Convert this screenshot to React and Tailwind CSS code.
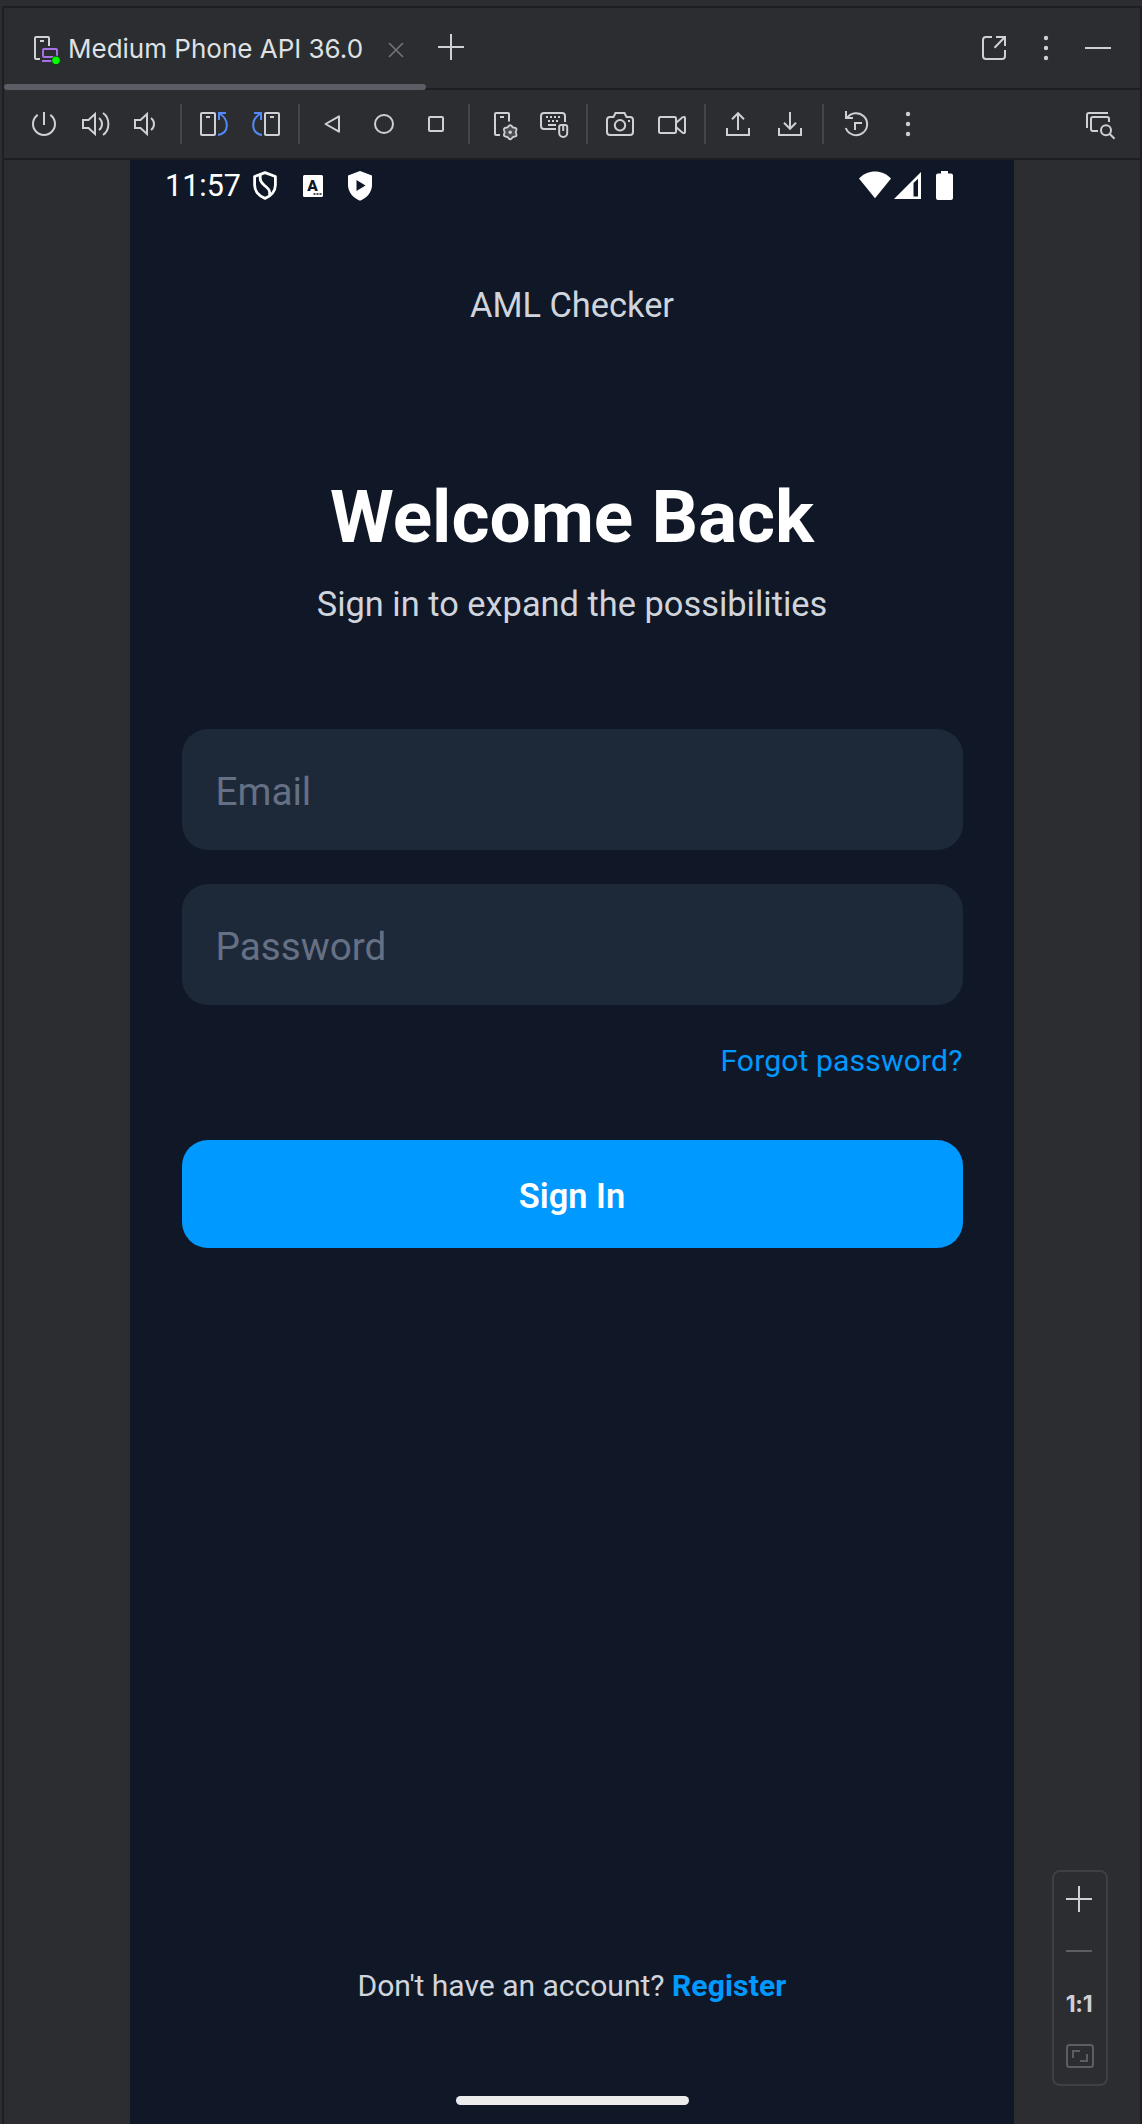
import React from "react";

const LIGHT = "#ced0d6";
const BLUE = "#548af7";

function Icon({ children, className = "" }) {
  return (
    <svg
      width="32"
      height="32"
      viewBox="0 0 32 32"
      fill="none"
      stroke={LIGHT}
      strokeWidth="2"
      className={"block shrink-0 overflow-visible " + className}
    >
      {children}
    </svg>
  );
}

const gearPath =
  Array.from({ length: 73 }, (_, i) => {
    const a = (i / 72) * Math.PI * 2;
    const r = 6.3 + 0.75 * Math.cos(6 * a);
    const x = 24.2 + r * Math.sin(a);
    const y = 24.2 - r * Math.cos(a);
    return `${i ? "L" : "M"}${x.toFixed(2)} ${y.toFixed(2)}`;
  }).join("") + "Z";

const Dots = () => (
  <Icon>
    <g fill={LIGHT} stroke="none">
      <circle cx="16" cy="6" r="2.2" />
      <circle cx="16" cy="16" r="2.2" />
      <circle cx="16" cy="26" r="2.2" />
    </g>
  </Icon>
);

const RotateShape = () => (
  <>
    <rect x="3" y="5" width="14" height="22" rx="1" />
    <path d="M8 9h4" />
    <path d="M28 5h-7v7M21.5 5.5C31.5 11.500 31.500 25 20 27" stroke={BLUE} />
  </>
);

const groups = [
  [
    <Icon key="power">
      <path d="M16 4v13M9.700 6.900a11 11 0 1 0 12.600 0" />
    </Icon>,
    <Icon key="volume-up">
      <path d="M3 12h5.500L15 6v20l-6.500-6H3zM19 10c4 3 4 9 0 12M23 5c7.200 5 7.200 17 0 22" />
    </Icon>,
    <Icon key="volume-down">
      <path d="M3 12h5.500L15 6v20l-6.500-6H3zM19 10c4 3 4 9 0 12" />
    </Icon>,
  ],
  [
    <Icon key="rotate-left">
      <RotateShape />
    </Icon>,
    <Icon key="rotate-right">
      <g transform="translate(32 0) scale(-1 1)">
        <RotateShape />
      </g>
    </Icon>,
  ],
  [
    <Icon key="back">
      <path d="M9.500 16L23 8.300v15.400z" strokeLinejoin="round" />
    </Icon>,
    <Icon key="home">
      <circle cx="16" cy="16" r="9" />
    </Icon>,
    <Icon key="overview">
      <rect x="9" y="9" width="14" height="14" rx="1" />
    </Icon>,
  ],
  [
    <Icon key="device-settings">
      <path d="M14 27H10a1 1 0 0 1-1-1V6a1 1 0 0 1 1-1h12a1 1 0 0 1 1 1v7.500M14 9h4" />
      <path d={gearPath} fill="#4b4d51" strokeWidth="1.800" />
      <circle cx="24.200" cy="24.200" r="1.700" fill={LIGHT} stroke="none" />
    </Icon>,
    <Icon key="hardware-input">
      <path d="M18 21H6a3 3 0 0 1-3-3V8a3 3 0 0 1 3-3h18a3 3 0 0 1 3 3v6" />
      <path d="M8 9h14" strokeDasharray="2 2" />
      <path d="M10 13h10" strokeDasharray="2 2" />
      <path d="M10 17h8" />
      <path d="M21.200 19a2 2 0 0 1 2-2h4a2 2 0 0 1 2 2v6a4 4 0 0 1-8 0zM25.200 17v6" />
    </Icon>,
  ],
  [
    <Icon key="camera">
      <path d="M6 9h3.500L11.500 5h9l2 4H26a3 3 0 0 1 3 3v12a3 3 0 0 1-3 3H6a3 3 0 0 1-3-3V12a3 3 0 0 1 3-3z" />
      <circle cx="16" cy="17.300" r="5.200" />
      <path d="M24 13h2" />
    </Icon>,
    <Icon key="video">
      <rect x="3" y="9" width="17" height="16" rx="1.500" />
      <path d="M20.500 14.500l6-5.200q2.500-1.200 2.500 1v13.400q0 2.200-2.500 1l-6-5.200" />
    </Icon>,
  ],
  [
    <Icon key="upload">
      <path d="M5 20v7h22v-7M16 22V5M10 11.200l6-6 6 6" />
    </Icon>,
    <Icon key="download">
      <path d="M5 20v7h22v-7M16 4v17M10 14.800l6 6 6-6" />
    </Icon>,
  ],
  [
    <Icon key="reset">
      <path d="M6 3v7h7M6.700 10.500A11 11 0 1 1 5.800 20M15 22v-7h7" />
    </Icon>,
    <Dots key="more" />,
  ],
];

function TitleBar() {
  return (
    <div className="flex h-20 shrink-0">
      <div className="relative flex w-[422px] flex-col">
        <div className="flex h-[76px] shrink-0 items-start pl-7 pt-6">
          <Icon>
            <path d="M8 27H4a1 1 0 0 1-1-1V6a1 1 0 0 1 1-1h12a1 1 0 0 1 1 1v8M8 9h4" />
            <rect x="11" y="17" width="14" height="8" rx="1" stroke="#a571e6" />
            <path d="M10 29h10" stroke="#a571e6" />
            <circle cx="24" cy="28.400" r="4.300" fill="#00ff00" stroke="#17351a" strokeWidth="1" />
          </Icon>
          <span className="ml-1 mt-px w-[321px] whitespace-nowrap font-['Inter'] text-[26px] leading-8 text-[#dfe1e5]">
            Medium Phone API 36.0
          </span>
          <svg width="16" height="16" viewBox="0 0 16 16" className="-ml-px mt-[10px] block shrink-0" stroke="#6f737a" strokeWidth="1.700">
            <path d="M1 1l14 14M15 1L1 15" />
          </svg>
        </div>
        <div className="z-10 h-[6px] shrink-0 rounded-full bg-[#5a5d63]" />
      </div>
      <svg width="26" height="26" viewBox="0 0 26 26" className="ml-3 mt-[26px] block" stroke={LIGHT} strokeWidth="2">
        <path d="M0 13h26M13 0v26" />
      </svg>
      <div className="ml-auto flex gap-5 pr-[26px] pt-6">
        <Icon>
          <path d="M14 5H8a3 3 0 0 0-3 3v16a3 3 0 0 0 3 3h16a3 3 0 0 0 3-3v-6M18 5h9v9M27 5L16.500 15.700" />
        </Icon>
        <Dots />
        <Icon>
          <path d="M3 16h26" />
        </Icon>
      </div>
    </div>
  );
}

function Toolbar() {
  return (
    <div className="flex h-[72px] shrink-0 items-center border-y-2 border-[#1e1f22] pl-[14px] pr-6">
      {groups.map((group, i) => (
        <React.Fragment key={i}>
          {i > 0 && <div className="mx-[6px] h-10 w-[2px] shrink-0 bg-[#43454a]" />}
          {group.map((icon, j) => (
            <div key={j} className="flex w-[52px] shrink-0 justify-center">
              {icon}
            </div>
          ))}
        </React.Fragment>
      ))}
      <div className="ml-auto">
        <Icon>
          <path d="M3 20V7a2 2 0 0 1 2-2h19M14 23H9a2 2 0 0 1-2-2V11a2 2 0 0 1 2-2h14a2 2 0 0 1 2 2v3" />
          <circle cx="22" cy="22.300" r="5" />
          <path d="M25.500 25.800l5 5" />
        </Icon>
      </div>
    </div>
  );
}

function StatusBar() {
  return (
    <div className="flex h-12 shrink-0 items-start pl-[35px] pr-[61px] pt-2 text-white">
      <span className="w-[88px] whitespace-nowrap text-[30.5px] leading-9">11:57</span>
      <svg width="24" height="29" viewBox="0 0 24 29" className="mt-[3px] block" fill="none" stroke="white" strokeWidth="2.800">
        <path d="M12 1.600L22.400 5.500V14c0 6-4.400 11-10.400 13.400C6 25 1.600 20 1.600 14V5.500z" strokeLinejoin="round" />
        <path d="M7.500 3.500C6 8 8 11.500 11.500 14.500S17.500 19 16.500 24" />
      </svg>
      <svg width="20" height="22" viewBox="0 0 20 22" className="ml-[26px] mt-[7px] block">
        <rect width="20" height="22" rx="1.500" fill="white" />
        <text x="9.500" y="16" textAnchor="middle" fontSize="15.500" fontWeight="900" fontFamily="Roboto, sans-serif" fill="#101827">
          A
        </text>
        <path d="M10.500 19h2M13.500 19h2M16.500 19h2" stroke="#101827" strokeWidth="1.500" />
      </svg>
      <svg width="24" height="30" viewBox="0 0 24 30" className="ml-[25px] mt-[3px] block">
        <path d="M12 0L24 4.500V14c0 7-5 13-12 15.700C5 27 0 21 0 14V4.500z" fill="white" />
        <path d="M8.500 9v11l9-5.500z" fill="#101827" />
      </svg>
      <svg width="32" height="28" viewBox="0 0 32 28" className="ml-auto mt-[3px] block">
        <path d="M16 27.300L0 7.500C8.500-2 23.500-2 32 7.500z" fill="white" />
      </svg>
      <svg width="28" height="28" viewBox="0 0 28 28" className="ml-[2px] mt-1 block">
        <path d="M28 0v27H1zM20.500 11v13.500h4.500V6.800z" fill="white" fillRule="evenodd" />
      </svg>
      <svg width="17" height="29" viewBox="0 0 17 29" className="ml-[15px] mt-[3px] block">
        <path d="M5 0h7v2.500h3a2 2 0 0 1 2 2V27a2 2 0 0 1-2 2H2a2 2 0 0 1-2-2V4.500a2 2 0 0 1 2-2h3z" fill="white" />
      </svg>
    </div>
  );
}

function Field({ label }) {
  return (
    <div className="flex h-[121px] items-center rounded-[26px] bg-[#1d2938] px-[34px] pt-[5px] text-[38.7px] leading-[48px] text-[#667085]">
      {label}
    </div>
  );
}

function Phone() {
  return (
    <main className="flex w-[884px] shrink-0 flex-col bg-[#101827] font-['Roboto',sans-serif]">
      <StatusBar />
      <div className="mt-[77px] text-center text-[34.4px] leading-10 text-[#d0d5dd]">AML Checker</div>
      <h1 className="mt-[148px] text-center text-[73px] font-bold leading-[88px] text-white">Welcome Back</h1>
      <p className="mt-[23px] text-center text-[34.4px] leading-10 text-[#d0d5dd]">Sign in to expand the possibilities</p>
      <form className="mx-[51.5px] mt-[105px] flex flex-col">
        <Field label="Email" />
        <div className="h-[34px]" />
        <Field label="Password" />
        <a className="mt-[38px] self-end whitespace-nowrap text-[30.1px] leading-9 tracking-[0.13px] text-[#0099ff]">Forgot password?</a>
        <button
          type="button"
          className="mt-[61px] h-[108px] rounded-[26px] bg-[#0099ff] pt-1 text-[34.4px] font-semibold leading-10 text-white"
        >
          Sign In
        </button>
      </form>
      <p className="mt-auto whitespace-pre text-center text-[30.1px] leading-9 text-[#d0d5dd]">
        <span className="tracking-[-0.04px]">Don't have an account? </span>
        <span className="font-bold tracking-[0.12px] text-[#0099ff]">Register</span>
      </p>
      <div className="mb-[19px] mt-[92px] h-[9px] w-[233px] self-center rounded-full bg-[#ececec]" />
    </main>
  );
}

function ZoomControls() {
  return (
    <div className="mb-[38px] ml-[38px] flex h-[216px] w-14 flex-col items-center self-end rounded-lg border-2 border-[#3e4042] pt-[11px]">
      <Icon>
        <path d="M2 16h26M15 3v26" />
      </Icon>
      <Icon className="mt-5">
        <path d="M2 16h26" stroke="#5d5e60" />
      </Icon>
      <span className="mt-[21px] h-8 w-8 whitespace-nowrap pr-0.5 text-center font-['Inter'] text-[23px] font-bold leading-8 tracking-[-0.4px] text-[#ced0d6]">
        1:1
      </span>
      <Icon className="mt-5">
        <g stroke="#5d5e60">
          <rect x="3" y="5" width="26" height="22" rx="2.500" />
          <path d="M9 18v-7h7M23 14v7h-7" />
        </g>
      </Icon>
    </div>
  );
}

export default function App() {
  return (
    <div className="flex h-[2124px] w-[1142px] flex-col overflow-hidden bg-[#2b2d30] pl-[2px] pt-[6px]">
      <div className="flex min-h-0 flex-1 flex-col border-l-2 border-r-2 border-t-2 border-[#1e1f22]">
        <TitleBar />
        <Toolbar />
        <div className="flex min-h-0 flex-1 pl-[126px]">
          <Phone />
          <ZoomControls />
        </div>
      </div>
    </div>
  );
}
